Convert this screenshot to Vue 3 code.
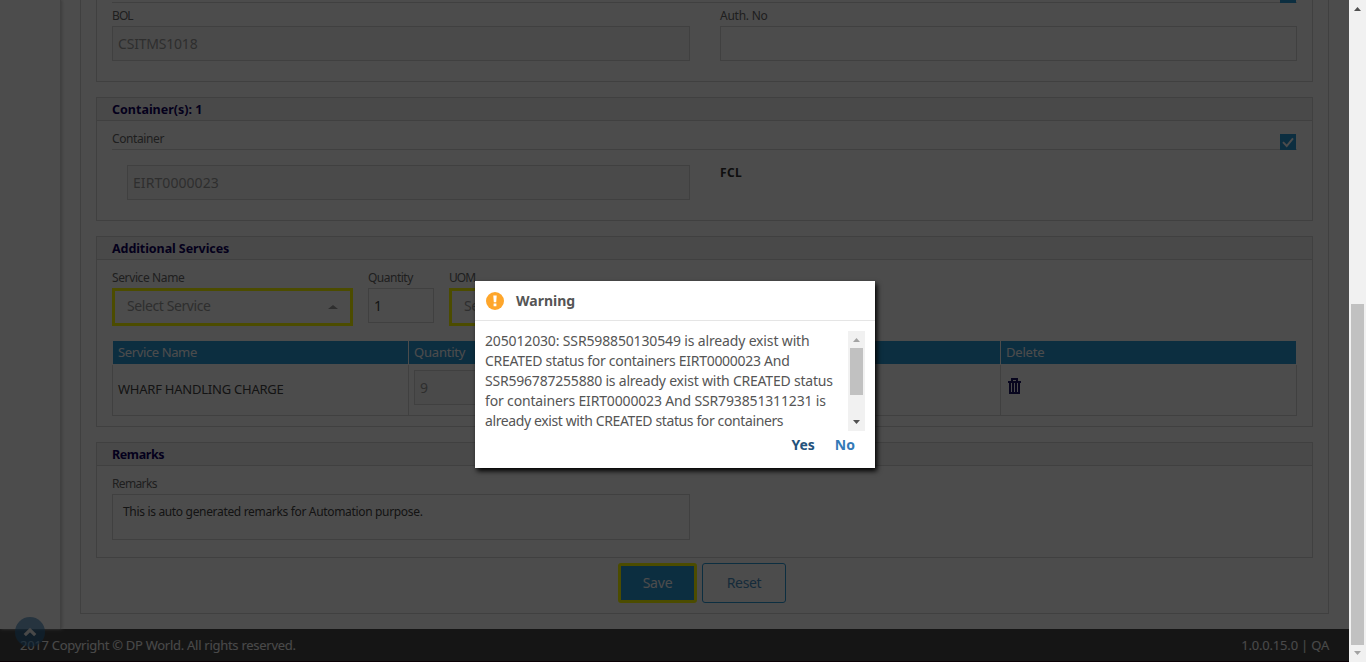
<script setup>
const messageLines = [
  { text: '205012030: SSR598850130549 is already exist with', cls: 'l1' },
  { text: 'CREATED status for containers EIRT0000023 And', cls: 'l2' },
  { text: 'SSR596787255880 is already exist with CREATED status', cls: 'l3' },
  { text: 'for containers EIRT0000023 And SSR793851311231 is', cls: 'l4' },
  { text: 'already exist with CREATED status for containers', cls: 'l5' },
]
</script>

<template>
  <div class="screen">
    <div class="page">
      <div class="body">
        <aside class="side"></aside>
        <main class="outer">
          <section class="panel first">
            <div class="rule top-rule"><span class="check clipped"></span></div>
            <div class="cols">
              <div class="col-left">
                <label class="lbl bol">BOL</label>
                <div class="input disabled">CSITMS1018</div>
              </div>
              <div class="col-right">
                <label class="lbl auth">Auth. No</label>
                <div class="input"></div>
              </div>
            </div>
          </section>

          <section class="panel containers">
            <h3><span>Container(s): 1</span></h3>
            <div class="rule cont-rule">
              <label class="lbl l-cont">Container</label>
              <span class="check">
                <svg width="16" height="16" viewBox="0 0 16 16"><path d="M3 8.2 6.7 12 13 4.3" fill="none" stroke="#fff" stroke-width="1.9" /></svg>
              </span>
            </div>
            <div class="cols cont-cols">
              <div class="input disabled indented">EIRT0000023</div>
              <div class="fcl">FCL</div>
            </div>
          </section>

          <section class="panel services">
            <h3><span class="h-add">Additional Services</span></h3>
            <div class="fields">
              <div class="f-service">
                <label class="lbl l-sn">Service Name</label>
                <div class="select"><span class="t-sel">Select Service</span><i class="caret"></i></div>
              </div>
              <div class="f-qty">
                <label class="lbl l-q">Quantity</label>
                <div class="input dark">1</div>
              </div>
              <div class="f-uom">
                <label class="lbl l-u">UOM</label>
                <div class="select"><span class="t-sel">Select</span><i class="caret"></i></div>
              </div>
            </div>
            <div class="table">
              <div class="tr head">
                <div><span class="t-sn">Service Name</span></div>
                <div><span>Quantity</span></div>
                <div></div>
                <div><span>Delete</span></div>
              </div>
              <div class="tr row">
                <div class="name"><span>WHARF HANDLING CHARGE</span></div>
                <div class="qty"><div class="input disabled">9</div></div>
                <div></div>
                <div class="del">
                  <svg width="14" height="17" viewBox="0 0 14 17" shape-rendering="crispEdges">
                    <path d="M3 0h7v3h3v2h-1v11H1V5H0V3h3zM5 2v1h3V2zM3 5v9h1V5zM6 5v9h1V5zM9 5v9h1V5z" fill="#1c1464" fill-rule="evenodd" />
                  </svg>
                </div>
              </div>
            </div>
          </section>

          <section class="panel remarks">
            <h3><span class="h-rem">Remarks</span></h3>
            <label class="lbl l-rem">Remarks</label>
            <div class="area">This is auto generated remarks for Automation purpose.</div>
          </section>

          <div class="actions">
            <button class="btn save">Save</button>
            <button class="btn reset">Reset</button>
          </div>
        </main>
      </div>
      <footer>
        <span class="copy">2017 Copyright © DP World. All rights reserved.</span>
        <span class="ver">1.0.0.15.0 | QA</span>
      </footer>
      <div class="to-top">
        <svg width="30" height="30" viewBox="0 0 30 30"><path d="M9.8 18.2 15 13l5.2 5.2" fill="none" stroke="#f0f0f0" stroke-width="3.2" /></svg>
      </div>
      <div class="overlay"></div>
    </div>

    <div class="scroll">
      <svg width="17" height="17" viewBox="0 0 17 17"><path d="M5 11 8.5 7 12 11z" fill="#505050" /></svg>
      <div class="thumb"></div>
      <svg width="17" height="17" viewBox="0 0 17 17"><path d="M5 6 8.5 10 12 6z" fill="#a3a3a3" /></svg>
    </div>

    <div class="modal">
      <header>
        <svg width="18" height="18" viewBox="0 0 18 18">
          <circle cx="9" cy="9" r="9" fill="#fea62b" />
          <path d="M7.3 3.6h3.4l-.5 6.6H7.8zM7.6 11.6h2.8v2.6H7.6z" fill="#fff" />
        </svg>
        <strong>Warning</strong>
      </header>
      <div class="message">
        <div class="lines">
          <div v-for="line in messageLines" :key="line.cls"><span :class="line.cls">{{ line.text }}</span></div>
        </div>
        <div class="mini">
          <svg width="17" height="17" viewBox="0 0 17 17"><path d="M5 11 8.5 7 12 11z" fill="#a3a3a3" /></svg>
          <div class="mini-thumb"></div>
          <svg width="17" height="17" viewBox="0 0 17 17"><path d="M5 6 8.5 10 12 6z" fill="#505050" /></svg>
        </div>
      </div>
      <div class="choices"><a class="yes">Yes</a><a class="no">No</a></div>
    </div>
  </div>
</template>

<style>
html, body { overflow: hidden; background: #fff; }
</style>

<style scoped>
* { box-sizing: border-box; }
.screen {
  position: relative; display: flex; width: 1366px; height: 662px; overflow: hidden;
  font-family: "Noto Sans", "Open Sans", sans-serif; font-size: 12px; color: #333;
}
.page { position: relative; width: 1349px; height: 662px; background: #fff; }
.overlay { position: absolute; inset: 0; background: rgba(0, 0, 0, .7); }
.body { display: flex; height: 629px; }
.side { width: 61px; height: 629px; border-right: 1px solid #d6d6d6; box-shadow: 1px 0 3px #c8c8c8; }
.outer { margin-left: 19px; width: 1249px; height: 614px; padding: 0 15px; border: 1px solid #d7d7d7; border-top: 0; }
.panel { width: 1217px; border: 1px solid #d7d7d7; margin-bottom: 15px; }
.first { height: 82px; border-top: 0; }
.containers { height: 124px; }
.services { height: 191px; }
.remarks { height: 116px; margin-bottom: 5px; }
h3 {
  margin: 0; height: 23px; padding-left: 15px; border-bottom: 1px solid #d7d7d7; background: #f5f5f5;
  font-size: 12.5px; line-height: 23px; font-weight: 700; color: #100060;
}
h3 span, .lbl, .t-sel, .row span, .head span, .lines span, strong, footer span { white-space: nowrap; }
.lbl { display: block; height: 20px; line-height: 20px; color: #686868; letter-spacing: -.25px; }
.bol, .l-u { letter-spacing: -.9px; }
.l-cont { letter-spacing: -.4px; }
.l-sn { letter-spacing: -.38px; }
.l-q { letter-spacing: -.5px; }
.l-rem { letter-spacing: -.65px; }
.h-add { letter-spacing: -.08px; }
.h-rem { letter-spacing: -.4px; }
.rule { position: relative; margin: 0 15px; border-bottom: 1px solid #d7d7d7; }
.top-rule { height: 3px; }
.cont-rule { height: 29px; padding-top: 8px; }
.check { position: absolute; right: 1px; bottom: -1px; width: 16px; height: 16px; background: #2b99d8; }
.check.clipped { height: 3px; }
.check svg { display: block; }
.cols { display: flex; margin-left: 15px; padding-top: 3px; gap: 30px; }
.col-left { width: 578px; }
.col-right { width: 577px; }
.input {
  height: 35px; padding-left: 5px; border: 1px solid #d7d7d7; font-size: 14px; line-height: 34px;
  color: #9b9b9b; letter-spacing: -.2px;
}
.input.disabled { background: #f8f8f8; }
.input.dark { color: #444; }
.cont-cols { padding-top: 15px; }
.indented { margin-left: 15px; width: 563px; letter-spacing: .07px; }
.fcl { height: 16px; font-weight: 700; line-height: 16px; color: #333; letter-spacing: .3px; }
.fields { display: flex; gap: 15px; padding: 8px 0 0 15px; height: 81px; }
.f-service { width: 241px; }
.f-qty { width: 66px; }
.f-uom { width: 241px; }
.select {
  display: flex; align-items: center; justify-content: space-between; height: 38px; padding: 0 12px;
  border: 3px solid #ffff00; font-size: 14px; color: #9b9b9b; letter-spacing: -.4px;
}
.t-sel { height: 32px; line-height: 30px; }
.caret { border: 5px solid transparent; border-top: 0; border-bottom: 4px solid #999; }
.table { margin-left: 15px; width: 1185px; }
.tr { display: grid; grid-template-columns: 296px 296px 296px 296px; }
.head { height: 24px; padding-left: 1px; font-size: 13px; line-height: 23px; color: #fff; letter-spacing: -.2px; }
.t-sn { letter-spacing: -.38px; }
.head div { height: 23px; padding-left: 5px; background: #2b99d8; border-right: 1px solid #fff; }
.head div:last-child { border-right: 0; width: 295px; }
.row { height: 51px; border: 1px solid #d7d7d7; border-top: 0; }
.row > div { border-right: 1px solid #d7d7d7; padding: 5px; }
.row > div:last-child { border-right: 0; }
.row .name { font-size: 13px; line-height: 38px; color: #444; letter-spacing: -.23px; }
.row .del { padding: 13px 7px; }
label.l-rem { margin: 8px 0 0 15px; }
.area {
  margin-left: 15px; width: 578px; height: 46px; padding: 8px 10px; border: 1px solid #d7d7d7;
  line-height: 17px; color: #444; white-space: nowrap; letter-spacing: -.33px;
}
.actions { display: flex; gap: 5px; padding-left: 522px; }
.btn { height: 40px; border-radius: 3px; padding: 0; font: 14px/34px "Noto Sans", sans-serif; letter-spacing: -.2px; }
.save { width: 79px; background: #2b99d8; border: 3px solid #ffff00; color: #fff; }
.reset { width: 84px; background: #fff; border: 1px solid #2b99d8; color: #4a90c4; letter-spacing: -.35px; }
footer {
  display: flex; justify-content: space-between; height: 33px; padding: 0 20px; background: #494949;
  border-bottom: 1px solid #220012; font-size: 13px; line-height: 33px; color: #f5f5f5; letter-spacing: -.2px;
}
.copy { letter-spacing: -.28px; }
.to-top { position: absolute; left: 15px; top: 617px; width: 30px; height: 30px; border-radius: 50%; background: rgba(43, 120, 180, .6); }
.to-top svg { display: block; }
.scroll { width: 17px; height: 662px; background: #f1f1f1; display: flex; flex-direction: column; justify-content: space-between; }
.scroll svg { display: block; }
.thumb { width: 13px; height: 341px; margin: 287px 2px 0; background: #c1c1c1; }
.modal {
  position: absolute; left: 475px; top: 281px; width: 400px; height: 187px; background: #fff;
  box-shadow: 2px 3px 5px #000; color: #555; font-size: 14px;
}
.modal header { display: flex; align-items: center; gap: 12px; height: 40px; padding-left: 11px; border-bottom: 1px solid #e5e5e5; }
.message { display: flex; justify-content: space-between; margin: 10px 10px 0; height: 100px; }
.lines { line-height: 20px; width: 363px; }
.l1 { letter-spacing: -.15px; }
.l2 { letter-spacing: -.28px; }
.l3 { letter-spacing: -.21px; }
.l4 { letter-spacing: -.155px; }
.l5 { letter-spacing: -.385px; }
.mini { width: 17px; height: 100px; background: #f1f1f1; }
.mini svg { display: block; }
.mini-thumb { width: 13px; height: 47px; margin: 0 2px 19px; background: #c1c1c1; }
.choices { display: flex; justify-content: flex-end; gap: 20px; padding-right: 20px; height: 28px; line-height: 28px; font-weight: 700; }
.yes { color: #23527c; }
.no { color: #337ab7; }
</style>
